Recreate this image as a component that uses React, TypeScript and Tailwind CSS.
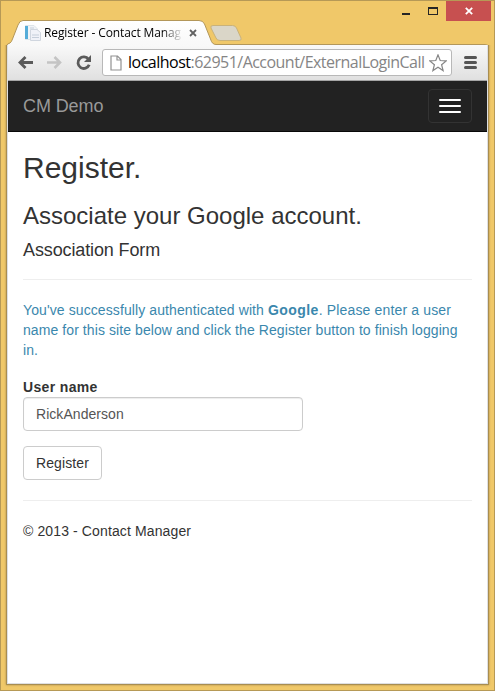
import React from "react";

const uiFont = "font-['Open_Sans','Noto_Sans',sans-serif]";

function TitleBar() {
  return (
    <div className="relative h-[44px] shrink-0">
      <svg className="absolute left-0 top-0" width="493" height="45" viewBox="1 1 493 45" fill="none">
        <defs>
          <linearGradient id="tab" x1="0" y1="20" x2="0" y2="46" gradientUnits="userSpaceOnUse">
            <stop stopColor="#ffffff" />
            <stop offset="1" stopColor="#f8f8f8" />
          </linearGradient>
        </defs>
        <path d="M213 25.500H232.500Q235.500 25.500 236.500 28L241 38Q242 40.500 239 40.500H220Q217 40.500 216 38L211 28Q210 25.500 213 25.500Z" fill="#dad6c8" stroke="#c9b27a" />
        <path d="M7 46Q7.500 43.500 10 43Q11.500 42 12.500 39L18 25Q19.500 20.500 23 20.500H199Q203 20.500 204.500 24L210.500 39Q212 44.500 216 44.500V46Z" fill="url(#tab)" />
        <path d="M6.500 46Q7 43.500 10 43Q11.500 42 12.500 39L18 25Q19.500 20.500 23 20.500H199Q203 20.500 204.500 24L210.500 39Q212 44.500 216 44.500H485Q488.500 44.500 488.500 47" stroke="#b3975a" />
      </svg>
      <div className={`absolute left-6 top-[20px] flex h-[24px] w-[176px] items-center ${uiFont}`}>
        <svg width="16" height="16" viewBox="0 0 16 16">
          <path d="M.5.500H9L12.500 4V14.500H.5Z" fill="#f1f4f7" stroke="#dde3e8" />
          <path d="M0 1H3V14H0Z" fill="#55acd8" />
          <path d="M5.500 4.500H12L15.500 7.500V15.500H5.500Z" fill="#f0f2f8" stroke="#d0d6df" />
          <path d="M7 10H14M7 12.500H14M5 3H9" stroke="#c5ceda" />
        </svg>
        <div className="ml-[3px] w-[138px] overflow-hidden whitespace-nowrap text-[12px] leading-5 tracking-[-0.110px] text-black [mask-image:linear-gradient(to_right,black_118px,transparent_139px)]">
          Register - Contact Manag
        </div>
        <svg className="ml-[7px]" width="8" height="8" viewBox="0 0 8 8">
          <path d="M1 1L7 7M7 1L1 7" stroke="#626262" strokeWidth="1.800" />
        </svg>
      </div>
      <div className="flex h-[20px] justify-end pr-[3px]">
        <svg width="44" height="20" viewBox="402 1 44 20">
          <path d="M402 13H410V15H402Z" fill="#252525" />
          <path d="M428 7H438V15H428ZM429 9V14H437V9Z" fill="#252525" fillRule="evenodd" />
        </svg>
        <div className="flex h-[20px] w-[45px] items-center justify-center bg-[#c75050]">
          <svg width="8" height="8" viewBox="0 0 8 8">
            <path d="M.8.8L7.200 7.200M7.200.8L.8 7.200" stroke="white" strokeWidth="1.800" />
          </svg>
        </div>
      </div>
    </div>
  );
}

function Toolbar() {
  return (
    <div className="flex h-[36px] items-center border-b border-[#a6a6a6] bg-linear-to-b from-[#f9f9f9] to-[#e0e0e0]">
      <svg className="-mt-px ml-[10px] shrink-0" width="75" height="20" viewBox="18 52 75 20" fill="none">
        <path d="M33 62.500H20M25.500 57L20 62.500L25.500 68" stroke="#5a5a5a" strokeWidth="2.800" />
        <path d="M47 62.500H60M54.500 57L60 62.500L54.500 68" stroke="#c4c4c4" strokeWidth="2.600" />
        <path d="M88.500 59.300A5.800 5.800 0 1 0 89.200 64.800" stroke="#5a5a5a" strokeWidth="2.800" />
        <path d="M91 55V62H84Z" fill="#5a5a5a" />
      </svg>
      <div className="ml-[9px] flex h-[27px] w-[350px] shrink-0 items-center rounded-[3px] border border-[#b8b8b8] bg-white">
        <svg className="ml-[7px] shrink-0" width="12" height="16" viewBox="0 0 12 16" fill="none">
          <path d="M1 1H7.500L11 4.500V15H1Z M7 1V5H11" stroke="#929292" strokeWidth="1.200" />
        </svg>
        <div className={`-mt-px ml-[6px] w-[299px] shrink-0 whitespace-nowrap text-[16px] leading-[24px] tracking-[-0.530px] text-[#858585] ${uiFont}`}>
          <span className="tracking-[-0.500px] text-black">localhost</span>:62951/Account/ExternalLoginCall
        </div>
        <svg className="ml-[2px] shrink-0" width="18" height="18" viewBox="0 0 18 18" fill="none">
          <path d="M9 .9L11.200 6.500L17.200 6.900L12.600 10.700L14.100 16.600L9 13.300L3.900 16.600L5.400 10.700L.8 6.900L6.800 6.500Z" stroke="#858585" strokeWidth="1.200" />
        </svg>
      </div>
      <div className="ml-3 flex flex-col gap-[2px]">
        <i className="h-[3px] w-[13px] rounded-full bg-[#555]" />
        <i className="h-[3px] w-[13px] rounded-full bg-[#555]" />
        <i className="h-[3px] w-[13px] rounded-full bg-[#555]" />
      </div>
    </div>
  );
}

export default function App() {
  return (
    <div className="flex h-[691px] w-[495px] flex-col border border-[#b69956] bg-[#f0c869] font-['Liberation_Sans',Arial,sans-serif] text-[14px] leading-5 text-[#333]">
      <TitleBar />
      <div className="ml-[6px] h-[639px] w-[481px] border border-t-0 border-[#dedfe2] bg-white shadow-[0_0_0_1px_#a88d50,0_0_2px_1px_#a88d50] [clip-path:inset(0_-4px_-4px_-4px)]">
        <Toolbar />
        <nav className="flex h-[51px] items-center justify-between border-b border-[#080808] bg-[#222] px-[15px]">
          <a className="text-[18px] leading-5 tracking-[-0.100px] text-[#999]">CM Demo</a>
          <button className="flex h-[34px] w-[44px] flex-col items-center justify-center gap-1 rounded border border-[#333]">
            <i className="h-[2px] w-[22px] rounded-[1px] bg-white" />
            <i className="h-[2px] w-[22px] rounded-[1px] bg-white" />
            <i className="h-[2px] w-[22px] rounded-[1px] bg-white" />
          </button>
        </nav>
        <main className="px-[15px] pt-[19px]">
          <h2 className="text-[30px] leading-[33px]">Register.</h2>
          <h3 className="mt-[19px] whitespace-nowrap text-[24px] leading-[26px]">Associate your Google account.</h3>
          <h4 className="mt-[11px] text-[18px] leading-5 tracking-[-0.120px]">Association Form</h4>
          <hr className="mt-[19px] border-[#eee]" />
          <p className="mt-5 whitespace-nowrap tracking-[0.100px] text-[#3a87ad]">
            You've successfully authenticated with <strong className="tracking-[0.420px]">Google</strong>
            <span className="tracking-[0.150px]">. Please enter a user</span>
            <br />
            <span className="tracking-[0.080px]">name for this site below and click the Register button to finish logging</span>
            <br />
            in.
          </p>
          <label className="mt-[17px] block font-bold tracking-[0.350px]">User name</label>
          <input
            className="block h-[34px] w-[280px] rounded border border-[#ccc] px-3 tracking-[0.050px] text-[#555] shadow-[inset_0_1px_1px_rgba(0,0,0,0.075)]"
            defaultValue="RickAnderson"
          />
          <button className="mt-[15px] block h-[34px] w-[79px] rounded border border-[#ccc] pl-3 text-left tracking-[0.100px] text-[#333]">Register</button>
          <hr className="mt-5 border-[#eee]" />
          <footer className="mt-5 tracking-[0.120px]">© 2013 - Contact Manager</footer>
        </main>
      </div>
    </div>
  );
}
